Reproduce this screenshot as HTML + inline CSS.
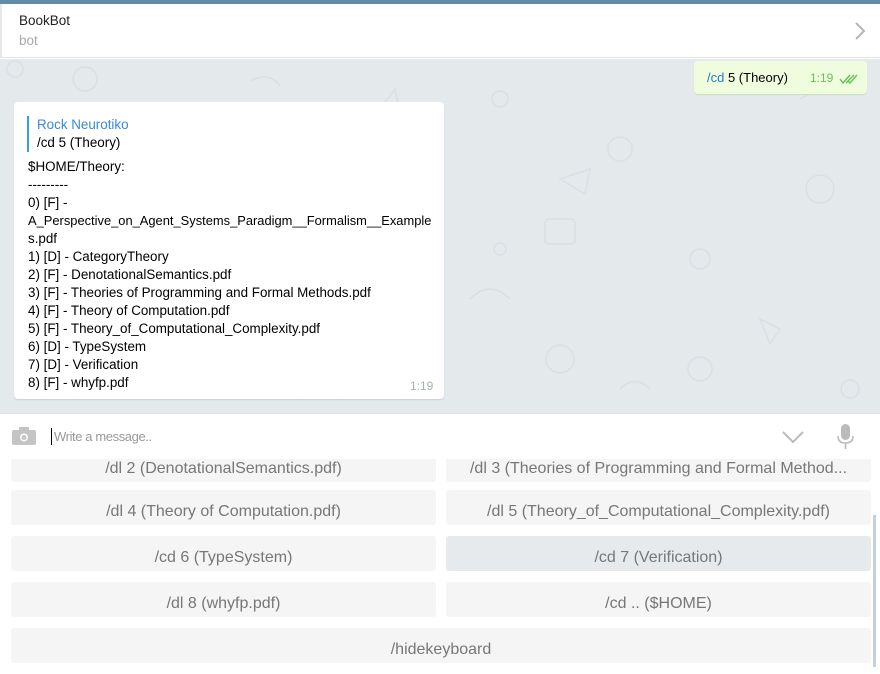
<!DOCTYPE html>
<html><head><meta charset="utf-8"><style>
*{margin:0;padding:0;box-sizing:border-box}
body{width:880px;height:674px;overflow:hidden;background:#fff;font-family:"Liberation Sans",sans-serif;position:relative}
.topbar{position:absolute;left:0;top:0;width:880px;height:4px;background:#6389ab}
.header{position:absolute;left:0;top:4px;width:880px;height:54px;background:#fff;border-bottom:1px solid #dfe3e6;border-left:2px solid #e6e9ec}
.title{position:absolute;left:17px;top:9px;font-size:13.5px;color:#222}
.sub{position:absolute;left:17px;top:29px;font-size:13.5px;color:#aaa}
.chat{position:absolute;left:0;top:59px;width:880px;height:354px;background:#e4e9ec}
.out{position:absolute;left:694px;top:61px;width:173px;height:33px;background:#effdde;border-radius:4px;box-shadow:0 1px 1px #c8e0b8;font-size:13px}
.in{position:absolute;left:14px;top:102px;width:430px;height:297px;background:#fff;border-radius:4px;box-shadow:0 1px 1px #ccd;font-size:13.4px;color:#000}
.in .l{position:absolute;left:14px;white-space:nowrap}
.comp{position:absolute;left:0;top:413px;width:880px;height:46px;background:#fff;border-top:1px solid #dde2e6}
.kb{position:absolute;left:0;top:459px;width:880px;height:215px;overflow:hidden;background:#fff}
.b{position:absolute;height:35px;background:#f5f5f5;border-radius:3px;color:#777;font-size:16px;text-align:center;line-height:35px;padding-top:4px;white-space:nowrap;overflow:hidden}
.L{left:11px;width:425px}.R{left:446px;width:425px}
</style></head><body>
<div class="topbar"></div>
<div class="header"><div class="title">BookBot</div><div class="sub">bot</div>
<svg style="position:absolute;left:852px;top:17px" width="12" height="20"><path d="M2 2 L10 10 L2 18" stroke="#b5b5b5" stroke-width="2" fill="none"/></svg></div>
<div class="chat">
<svg width="880" height="354" style="position:absolute;left:0;top:0;opacity:.5">
<g stroke="#cfd6dc" stroke-width="1.5" fill="none">
<circle cx="15" cy="10" r="8"/><circle cx="85" cy="20" r="12"/><path d="M380 50 l15 -20 l5 25z"/><circle cx="500" cy="40" r="8"/><path d="M250 22 q20 -10 30 5"/><circle cx="620" cy="90" r="12"/><path d="M560 120 l30 -10 l-5 25z"/><rect x="545" y="160" width="30" height="25" rx="4"/><circle cx="820" cy="130" r="14"/><circle cx="700" cy="200" r="10"/><path d="M470 240 q20 -20 40 0"/><circle cx="560" cy="300" r="14"/><path d="M760 260 l20 10 l-10 15z"/><circle cx="850" cy="330" r="9"/><path d="M620 330 q15 -15 30 0"/><circle cx="500" cy="190" r="6"/><path d="M800 40 l20 -10"/><circle cx="700" cy="310" r="12"/><path d="M40 340 q20 -15 40 0"/><path d="M300 340 q20 -15 40 0"/>
</g></svg>
</div>
<div class="out"><span style="position:absolute;left:13px;top:9px"><span style="color:#2a7bc0">/cd</span> 5 (Theory)</span><span style="position:absolute;left:116px;top:10px;color:#6cbf5b;font-size:12px">1:19</span>
<svg style="position:absolute;left:145px;top:12px" width="20" height="12"><path d="M1 6 l3 4 l7 -8 M7 10 l8 -8 M9 8 l2 2 l7 -8" stroke="#5dc452" stroke-width="1.4" fill="none"/></svg></div>
<div class="in">
<div style="position:absolute;left:13px;top:14px;width:2px;height:36px;background:#3a9ee4"></div>
<div class="l" style="left:23px;top:15px;color:#3a88d6">Rock Neurotiko</div>
<div class="l" style="left:23px;top:33px">/cd 5 (Theory)</div>
<div class="l" style="top:57px">$HOME/Theory:</div>
<div class="l" style="top:75px">---------</div>
<div class="l" style="top:93px">0) [F] -</div>
<div class="l" style="top:111px;font-size:12.9px">A_Perspective_on_Agent_Systems_Paradigm__Formalism__Example</div>
<div class="l" style="top:129px">s.pdf</div>
<div class="l" style="top:147px">1) [D] - CategoryTheory</div>
<div class="l" style="top:165px">2) [F] - DenotationalSemantics.pdf</div>
<div class="l" style="top:183px">3) [F] - Theories of Programming and Formal Methods.pdf</div>
<div class="l" style="top:201px">4) [F] - Theory of Computation.pdf</div>
<div class="l" style="top:219px">5) [F] - Theory_of_Computational_Complexity.pdf</div>
<div class="l" style="top:237px">6) [D] - TypeSystem</div>
<div class="l" style="top:255px">7) [D] - Verification</div>
<div class="l" style="top:273px">8) [F] - whyfp.pdf</div>
<div style="position:absolute;left:396px;top:277px;font-size:12px;color:#a5b0b8">1:19</div>
</div>
<div class="comp">
<svg style="position:absolute;left:12px;top:13px" width="24" height="18"><rect x="0" y="3" width="24" height="15" rx="2" fill="#c4c4c4"/><rect x="7" y="0" width="10" height="5" fill="#c4c4c4"/><circle cx="12" cy="10.5" r="4" fill="#fff"/><circle cx="12" cy="10.5" r="2.5" fill="#c4c4c4"/></svg>
<div style="position:absolute;left:51px;top:14px;width:1px;height:17px;background:#000"></div>
<div style="position:absolute;left:54px;top:15px;font-size:13px;color:#999;letter-spacing:-0.4px">Write a message..</div>
<svg style="position:absolute;left:781px;top:16px" width="24" height="14"><path d="M2 2 L12 12 L22 2" stroke="#bbb" stroke-width="2" fill="none"/></svg>
<svg style="position:absolute;left:835px;top:9px" width="20" height="28"><rect x="6" y="1" width="9" height="16" rx="4.5" fill="#bbb"/><path d="M3 13 q0 7 7.5 7 q7.5 0 7.5 -7" stroke="#bbb" stroke-width="1.6" fill="none"/><path d="M10.5 20 v6" stroke="#bbb" stroke-width="1.6"/></svg>
</div>
<div class="kb">
<div class="b L" style="top:-12px">/dl 2 (DenotationalSemantics.pdf)</div>
<div class="b R" style="top:-12px">/dl 3 (Theories of Programming and Formal Method...</div>
<div class="b L" style="top:31px">/dl 4 (Theory of Computation.pdf)</div>
<div class="b R" style="top:31px">/dl 5 (Theory_of_Computational_Complexity.pdf)</div>
<div class="b L" style="top:77px">/cd 6 (TypeSystem)</div>
<div class="b R" style="top:77px;background:#e7eaed">/cd 7 (Verification)</div>
<div class="b L" style="top:123px">/dl 8 (whyfp.pdf)</div>
<div class="b R" style="top:123px">/cd .. ($HOME)</div>
<div class="b" style="left:11px;width:860px;top:169px">/hidekeyboard</div>
<div style="position:absolute;left:873px;top:56px;width:3px;height:152px;background:#c5d2dd"></div>
</div>
</body></html>
